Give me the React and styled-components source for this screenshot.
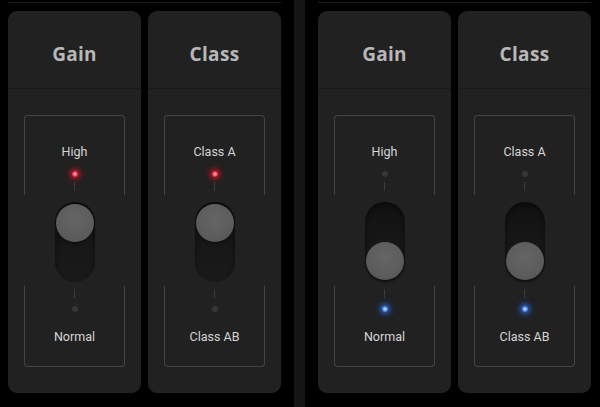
import React from 'react';
import styled, { createGlobalStyle, css } from 'styled-components';

const GlobalStyle = createGlobalStyle`
  html, body {
    margin: 0;
    padding: 0;
    background: #000;
  }
  body {
    font-family: Roboto, "Liberation Sans", sans-serif;
  }
`;

const Page = styled.div`
  width: 600px;
  height: 407px;
  display: flex;
  background: #000;
  overflow: hidden;
`;

const Group = styled.div`
  display: flex;
  flex-direction: column;
  padding: 2px 0 0 ${(p) => p.$left}px;
`;

const TopRule = styled.div`
  height: 1px;
  background: #1d1d1d;
  margin-bottom: 8px;
`;

const Cards = styled.div`
  display: flex;
  gap: 7px;
`;

const Divider = styled.div`
  width: 11px;
  height: 407px;
  margin-left: 13px;
  background: #151515;
`;

const Card = styled.div`
  width: 133px;
  height: 382px;
  background: #212121;
  border-radius: 9px;
  display: flex;
  flex-direction: column;
`;

const Header = styled.div`
  height: 78px;
  display: flex;
  align-items: center;
  justify-content: center;
  padding-top: 9px;
  box-sizing: border-box;
  border-bottom: 1px solid #191919;
`;

const Title = styled.div`
  font-family: "Open Sans", "Liberation Sans", sans-serif;
  font-weight: 700;
  font-size: 19px;
  letter-spacing: 0.3px;
  color: #b8b8b8;
`;

const Body = styled.div`
  padding: 26px 16px 25px;
`;

const Frame = styled.div`
  position: relative;
  height: 252px;
  box-sizing: border-box;
  padding: 29px 0 22px;
  display: flex;
  flex-direction: column;
  align-items: center;

  &::before,
  &::after {
    content: '';
    position: absolute;
    left: 0;
    right: 0;
    border: 1.5px solid #444;
  }
  &::before {
    top: 0;
    height: 79px;
    border-bottom: none;
    border-radius: 4px 4px 0 0;
  }
  &::after {
    bottom: 0;
    height: 80px;
    border-top: none;
    border-radius: 0 0 4px 4px;
  }
`;

const Label = styled.div`
  font-size: 12.5px;
  line-height: 16px;
  color: #d6d6d6;
  margin-top: ${(p) => p.$mt || 0}px;
`;

const Led = styled.div`
  width: 6px;
  height: 6px;
  border-radius: 50%;
  margin-top: ${(p) => p.$mt}px;
  background: #363636;
  ${(p) =>
    p.$on === 'red' &&
    css`
      background: radial-gradient(circle, #ffd6da 0%, #ff3048 55%, #d0102a 100%);
      box-shadow: 0 0 4px 2px rgba(255, 30, 55, 0.55), 0 0 9px 3px rgba(200, 0, 30, 0.3);
    `}
  ${(p) =>
    p.$on === 'blue' &&
    css`
      background: radial-gradient(circle, #e0ecff 0%, #4a8cff 55%, #1b5ae0 100%);
      box-shadow: 0 0 4px 2px rgba(60, 130, 255, 0.55), 0 0 9px 3px rgba(30, 90, 230, 0.3);
    `}
`;

const Tick = styled.div`
  width: 1.5px;
  height: 9px;
  background: #3c3c3c;
  margin-top: ${(p) => p.$mt}px;
`;

const Track = styled.div`
  width: 40px;
  height: 80px;
  margin-top: 11px;
  box-sizing: border-box;
  padding: 2px 1px;
  border-radius: 20px;
  background: linear-gradient(180deg, #111 0%, #161616 45%, #1a1a1a 100%);
  box-shadow: inset 0 3px 5px rgba(0, 0, 0, 0.45);
  display: flex;
  flex-direction: column;
  justify-content: ${(p) => (p.$down ? 'flex-end' : 'flex-start')};
  align-items: center;
`;

const Knob = styled.div`
  width: 38px;
  height: 38px;
  border-radius: 50%;
  background: radial-gradient(circle at 50% 40%, #656565 0%, #5c5c5c 60%, #535353 100%);
  box-shadow: 0 2px 3px rgba(0, 0, 0, 0.35);
`;

const Switch = ({ title, top, bottom, down }) => (
  <Card>
    <Header>
      <Title>{title}</Title>
    </Header>
    <Body>
      <Frame>
        <Label>{top}</Label>
        <Led $mt={11} $on={down ? null : 'red'} />
        <Tick $mt={5} />
        <Track $down={down}>
          <Knob />
        </Track>
        <Tick $mt={7} />
        <Led $mt={8} $on={down ? 'blue' : null} />
        <Label $mt={17}>{bottom}</Label>
      </Frame>
    </Body>
  </Card>
);

const App = () => (
  <>
    <GlobalStyle />
    <Page>
      <Group $left={8}>
        <TopRule />
        <Cards>
          <Switch title="Gain" top="High" bottom="Normal" />
          <Switch title="Class" top="Class A" bottom="Class AB" />
        </Cards>
      </Group>
      <Divider />
      <Group $left={13}>
        <TopRule />
        <Cards>
          <Switch title="Gain" top="High" bottom="Normal" down />
          <Switch title="Class" top="Class A" bottom="Class AB" down />
        </Cards>
      </Group>
    </Page>
  </>
);

export default App;
